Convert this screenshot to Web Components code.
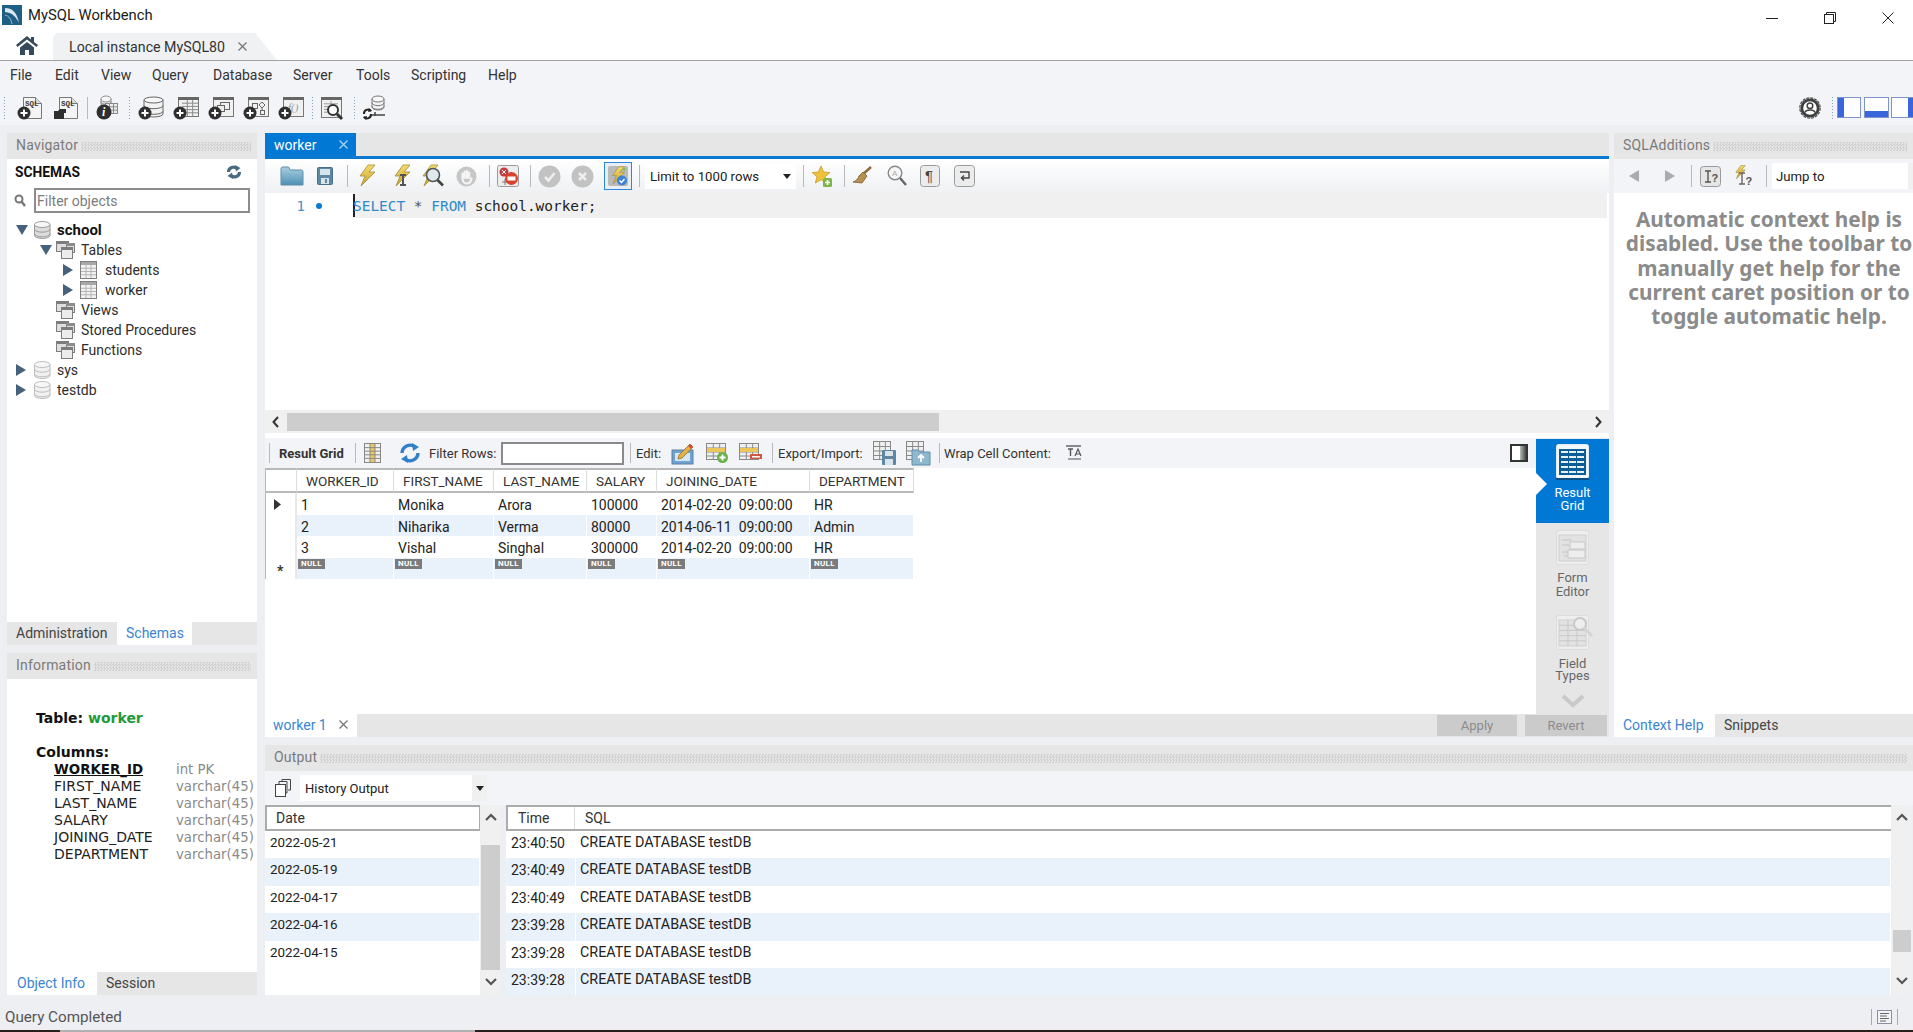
<!DOCTYPE html>
<html>
<head>
<meta charset="utf-8">
<title>MySQL Workbench</title>
<style>
  html,body{margin:0;padding:0;}
  body{width:1913px;height:1032px;overflow:hidden;background:#eeeff2;font-family:Roboto,"Noto Sans",sans-serif;font-size:14px;color:#222;}
</style>
</head>
<body>
<wb-titlebar></wb-titlebar>
<wb-tabstrip></wb-tabstrip>
<wb-menubar></wb-menubar>
<wb-maintools></wb-maintools>
<wb-main>
  <wb-navigator slot="nav"></wb-navigator>
  <wb-info slot="info"></wb-info>
  <wb-editor slot="editor"></wb-editor>
  <wb-result slot="result"></wb-result>
  <wb-additions slot="additions"></wb-additions>
  <wb-output slot="output"></wb-output>
</wb-main>
<wb-status></wb-status>

<script>
// small drawing helpers for the toolbar icons
const plus=(x,y,r=6.5)=>`<circle cx="${x}" cy="${y}" r="${r}" fill="#2f2f2f"/><path d="M${x-3.5} ${y}h7M${x} ${y-3.5}v7" stroke="#fff" stroke-width="2"/>`;
const win=(x,y,w,h,inner='')=>`<rect x="${x+.5}" y="${y+.5}" width="${w}" height="${h}" fill="#f1f1f1" stroke="#777"/><rect x="${x}" y="${y}" width="${w+1}" height="3" fill="#666"/>${inner}`;
const cyl=(x,y,w,h,f='#e9e9e9',s='#8f8f8f')=>{
  const b=h-6,t=h/3-1;
  return `<path d="M${x} ${y+3}v${b}a${w/2} 3 0 0 0 ${w} 0v-${b}z" fill="${f}" stroke="${s}"/><ellipse cx="${x+w/2}" cy="${y+3}" rx="${w/2}" ry="3" fill="#f7f7f7" stroke="${s}"/><path d="M${x} ${y+3+t}a${w/2} 3 0 0 0 ${w} 0M${x} ${y+3+2*t}a${w/2} 3 0 0 0 ${w} 0" fill="none" stroke="${s}"/>`;
};
const lines=(x,y,w,h,nx,ny,c='#8a8a8a')=>{
  let d='';
  for(let i=1;i<nx;i++)d+=`M${x+i*w/nx} ${y}v${h}`;
  for(let i=1;i<ny;i++)d+=`M${x} ${y+i*h/ny}h${w}`;
  return `<path d="${d}" stroke="${c}" stroke-width="1" fill="none"/>`;
};
const boltPath='M11 1L3 12h5L4 22 18 8h-6l6-7z';
const bolt=`<defs><linearGradient id="b" x1="0" y1="0" x2="0" y2="1"><stop offset="0" stop-color="#f6dc6a"/><stop offset="1" stop-color="#c9a02e"/></linearGradient></defs>`;
const grp=(inner='')=>`<rect x="1.500" y=".5" width="12" height="10" fill="#dedede" stroke="#7d7d7d"/><rect x="1" y="0" width="13" height="3" fill="#7d7d7d"/><rect x="11.500" y="2.500" width="8" height="9" fill="#dedede" stroke="#7d7d7d"/><rect x="11" y="2" width="9" height="3" fill="#8c8c8c"/><rect x="6.500" y="6.500" width="11" height="11" fill="#ececec" stroke="#7d7d7d"/><rect x="6" y="6" width="12" height="3" fill="#7d7d7d"/>${inner}`;

const ICONS={
  logo:[20,20,`<rect width="20" height="20" fill="#1e5f86"/><path d="M3 3c7 0 12 4 14 15-3-6-6-10-14-11z" fill="#d9e6ee"/><path d="M3 10c4 1 6 4 7 9" stroke="#9bbccd" fill="none"/>`],
  home:[22,20,`<path d="M11 1L0 10l1.500 2L11 4.500 20.500 12 22 10l-4-3V2h-3v2.600z" fill="#37495c"/><path d="M4 12.500L11 7l7 5.500V20h-5v-5H9v5H4z" fill="#37495c"/>`],
  newsql:[26,24,`<path d="M6.500 1.500h12l6 6v15h-18z" fill="#f4f4f4" stroke="#777"/><path d="M18.500 1.500v6h6" fill="#ddd" stroke="#777"/><text x="8" y="10" font-family="Liberation Mono" font-weight="700" font-size="7.500" fill="#333">SQL</text>${plus(7,17)}`],
  opensql:[26,24,`<path d="M6.500 1.500h12l6 6v15h-18z" fill="#f4f4f4" stroke="#777"/><path d="M18.500 1.500v6h6" fill="#ddd" stroke="#777"/><text x="8" y="10" font-family="Liberation Mono" font-weight="700" font-size="7.500" fill="#333">SQL</text><path d="M1 23v-8h4l2-2h6v4h-2v6z" fill="#2f2f2f"/>`],
  info:[22,24,`${cyl(5,0,10,10)}<rect x="9.500" y="7.500" width="12" height="10" fill="#eee" stroke="#888"/>${lines(9.500,7.500,12,10,3,3)}<circle cx="8" cy="16" r="7.500" fill="#2f2f2f"/><text x="6" y="20" font-family="Liberation Serif" font-style="italic" font-weight="700" font-size="12" fill="#fff">i</text>`],
  newschema:[26,24,`${cyl(6,1,19,20,'#f2f2f2','#666')}${plus(7,17)}`],
  newtable:[26,24,`${win(5,1,20,19,lines(9,4,16,16,3,5))}${plus(7,17)}`],
  newview:[26,24,`${win(5,1,20,19,'<rect x="12.500" y="6.500" width="9" height="7" fill="none" stroke="#666"/><rect x="9.500" y="9.500" width="7" height="6" fill="#eee" stroke="#666"/>')}${plus(7,17)}`],
  newproc:[26,24,`${win(5,1,20,19,'<rect x="9.500" y="7.500" width="5" height="5" fill="none" stroke="#666"/><path d="M19 6l3 3-3 3-3-3zM19 12v3" fill="none" stroke="#666"/><rect x="17.500" y="14.500" width="4" height="4" fill="none" stroke="#666"/>')}${plus(7,17)}`],
  newfunc:[26,24,`${win(5,1,20,19,'<text x="10" y="15" font-family="Liberation Serif" font-style="italic" font-size="11" fill="#999">f()</text>')}${plus(7,17)}`],
  inspect:[23,24,`${win(1,1,20,20,lines(4,5,14,14,2,5,'#999'))}<circle cx="13" cy="14" r="5" fill="#fff" stroke="#333" stroke-width="2"/><path d="M17 18l5 5" stroke="#333" stroke-width="3"/>`],
  reconnect:[24,24,`${cyl(10,0,12,14,'#f2f2f2','#777')}<path d="M13 16v4M10 19h13" stroke="#444" stroke-width="1.500"/><path d="M2 18a4 4 0 0 1 7-3M9 18a4 4 0 0 1-7 3" fill="none" stroke="#222" stroke-width="2"/><path d="M7 12l3 3-4 1zM4 24l-3-3 4-1z" fill="#222"/>`],
  acct:[22,22,`<circle cx="11" cy="11" r="10.200" fill="none" stroke="#4a4a4a" stroke-width="1.200" stroke-dasharray="3 1"/><circle cx="11" cy="11" r="8.200" fill="#fff" stroke="#3f3f3f" stroke-width="2.800"/><circle cx="11" cy="8.800" r="2.800" fill="none" stroke="#3f3f3f" stroke-width="1.500"/><path d="M5.800 15.500c1.200-3.500 9.200-3.500 10.400 0" fill="none" stroke="#3f3f3f" stroke-width="1.500"/>`],
  layL:[24,21,`<rect x=".5" y=".5" width="23" height="20" fill="#fff" stroke="#7f93c9"/><rect x="1" y="1" width="6" height="19" fill="#3a66dc"/>`],
  layM:[25,21,`<rect x=".5" y=".5" width="24" height="20" fill="#fff" stroke="#7f93c9"/><rect x="1" y="14" width="23" height="6" fill="#3a66dc"/>`],
  layR:[22,21,`<rect x=".5" y=".5" width="24" height="20" fill="#fff" stroke="#7f93c9"/><rect x="17" y="1" width="7" height="19" fill="#3a66dc"/>`],
  folder:[24,20,`<defs><linearGradient id="f" x1="0" y1="0" x2="0" y2="1"><stop offset="0" stop-color="#a9cfe4"/><stop offset="1" stop-color="#4f8fb3"/></linearGradient></defs><path d="M1 19V2.500C1 1.700 1.700 1 2.500 1h6l2 3h11c.8 0 1.500.7 1.500 1.500V19z" fill="url(#f)" stroke="#5f8ea8"/>`],
  save:[16,20,`<rect x=".5" y="1.500" width="15" height="17" rx="1" fill="#5d87a3" stroke="#48708b"/><rect x="3" y="3" width="10" height="6" fill="#d8e4ec"/><rect x="4" y="12" width="8" height="6" fill="#d8e4ec"/><rect x="8" y="13" width="2" height="4" fill="#5d87a3"/>`],
  bolt:[19,24,`${bolt}<path d="${boltPath}" fill="url(#b)" stroke="#a58a3a" stroke-width=".8"/>`],
  boltI:[18,24,`${bolt}<path d="${boltPath}" fill="url(#b)" stroke="#a58a3a" stroke-width=".8"/><path d="M8 11h6M11 11v10M8 21h6" stroke="#555" stroke-width="2"/>`],
  boltMag:[24,24,`${bolt}<path d="${boltPath}" fill="url(#b)" stroke="#a58a3a" stroke-width=".8"/><circle cx="13" cy="11" r="6.500" fill="#dfe8ec" stroke="#555" stroke-width="1.600"/><path d="M17.500 16l5.500 5.500" stroke="#444" stroke-width="2.600"/>`],
  hand:[21,21,`<circle cx="10.500" cy="10.500" r="10" fill="#c6c6c6"/><path d="M6.500 13V7.500M8.700 12V5.500M11 12V5M13.200 12V6.500M6.500 13c.4 3.500 2 4.500 4.500 4.500s4-1.500 4.500-5" fill="none" stroke="#f4f4f4" stroke-width="2.200" stroke-linecap="round"/>`],
  stopErr:[22,22,`<rect x=".5" y=".5" width="21" height="21" rx="2" fill="#ededed" stroke="#9b9b9b"/><path d="M5 17h6M8 14v6" stroke="#777"/><circle cx="7" cy="7" r="4.500" fill="#c53a3a"/><path d="M5 5l4 4M9 5l-4 4" stroke="#fff"/><circle cx="14.500" cy="13.500" r="6.500" fill="#d8432f"/><rect x="10.500" y="11.500" width="8" height="4" fill="#fff"/>`],
  check:[23,23,`<circle cx="11.500" cy="11.500" r="11" fill="#c2c2c2"/><path d="M7 12l3.500 3.500L16.500 8" fill="none" stroke="#eee" stroke-width="2.600"/>`],
  cross:[23,23,`<circle cx="11.500" cy="11.500" r="11" fill="#c2c2c2"/><path d="M8 8l7 7M15 8l-7 7" fill="none" stroke="#eee" stroke-width="2.600"/>`],
  toggle:[28,28,`<rect x=".5" y=".5" width="27" height="27" fill="#e8eef4" stroke="#2f86d6"/><rect x="4" y="4" width="20" height="20" rx="2" fill="#b9b9b9"/>${bolt}<g transform="translate(6 4) scale(.8)"><path d="${boltPath}" fill="url(#b)" stroke="#a58a3a" stroke-width=".8"/></g><circle cx="18" cy="18.500" r="5" fill="#3d82d4"/><path d="M15.500 18.500l2 2 3-3.500" fill="none" stroke="#fff" stroke-width="1.400"/><circle cx="20" cy="7" r="1.500" fill="#7cc14c"/>`],
  star:[21,24,`<path d="M9 2l2.600 6 6.400.5-4.900 4.200 1.500 6.300L9 15.700 3.400 19l1.500-6.300L0 8.500 6.400 8z" fill="#f0c23b" stroke="#c79a28" stroke-width=".8"/><rect x="11" y="14" width="9" height="9" rx="1.500" fill="#7cb64a"/><path d="M15.500 16v5M13 18.500h5" stroke="#fff" stroke-width="1.600"/>`],
  broom:[21,20,`<path d="M19 1L10 9" stroke="#8c6a3a" stroke-width="2.400"/><path d="M11 6l4 4-5 7-9-1c3-1 5-3 6-6z" fill="#b6924f" stroke="#7d6030" stroke-width=".8"/>`],
  mag:[20,22,`<circle cx="8" cy="8" r="6.800" fill="#f7f7f7" stroke="#888" stroke-width="1.400"/><path d="M13 13l6 7" stroke="#666" stroke-width="2.400"/><text x="5" y="11" font-family="Liberation Sans" font-size="8" fill="#aaa">A</text>`],
  para:[20,22,`<rect x=".5" y=".5" width="19" height="21" rx="3" fill="#ececec" stroke="#9b9b9b"/><text x="5" y="16" font-family="Liberation Sans" font-size="15" fill="#444">¶</text>`],
  wrap:[21,22,`<rect x=".5" y=".5" width="20" height="21" rx="3" fill="#ececec" stroke="#9b9b9b"/><path d="M6 7h9v6H8M10 10.500L7.500 13l2.500 2.500" fill="none" stroke="#444" stroke-width="1.400"/>`],
  refresh:[16,14,`<path d="M2.500 7a5 5 0 0 1 8.500-3.500M13.500 7a5 5 0 0 1-8.500 3.500" fill="none" stroke="#4a6a80" stroke-width="3.200"/><path d="M9 0l5.500 3L10 6.500zM7 14l-5.500-3L6 7.500z" fill="#4a6a80"/>`],
  search:[12,13,`<circle cx="5" cy="5" r="3.500" fill="none" stroke="#777" stroke-width="2"/><path d="M7.500 7.500L11 12" stroke="#777" stroke-width="2.400"/>`],
  dbg:[17,18,`${cyl(.5,.5,15.500,17,'#dcdcdc','#9a9a9a')}`],
  dbl:[17,18,`${cyl(.5,.5,15.500,17,'#f1f1f1','#bdbdbd')}`],
  grp:[20,18,grp()],
  tbl:[17,18,`<rect x=".5" y=".5" width="16" height="17" fill="#f2f2f2" stroke="#7f7f7f"/><rect x="1" y="1" width="15" height="3" fill="#a8a8a8"/>${lines(1,4,15,13,3,4,'#b4b4b4')}`],
  'tri-d':[12,10,`<path d="M0 0h12L6 10z" fill="#46617b"/>`],
  'tri-r':[10,12,`<path d="M0 0l10 6-10 6z" fill="#46617b"/>`],
  'row-r':[7,11,`<path d="M0 0l7 5.500-7 5.500z" fill="#333"/>`],
  colgrid:[17,20,`<rect x=".5" y=".5" width="16" height="19" fill="#f0f0f0" stroke="#888"/><rect x="6" y="1" width="5" height="18" fill="#ecc65a"/>${lines(1,1,15,18,3,5)}`],
  sync:[22,22,`<path d="M3 11a8 8 0 0 1 13-6M19 11a8 8 0 0 1-13 6" fill="none" stroke="#2f7fc9" stroke-width="3.400"/><path d="M13 1l7 4-6 4zM9 21l-7-4 6-4z" fill="#2f7fc9"/>`],
  edit:[23,22,`<rect x="1" y="8" width="21" height="14" fill="#6fa3d4" stroke="#5c7f9f"/><rect x="4" y="11" width="15" height="8" fill="#d7e6f3"/><path d="M19 2l3 3-11 11-4 1 1-4z" fill="#e4b14d" stroke="#9a6f22" stroke-width=".8"/><path d="M19 2l3 3-2 2-3-3z" fill="#d34b3b"/>`],
  addrow:[23,20,`<rect x=".5" y=".5" width="19" height="16" fill="#f0f0f0" stroke="#888"/>${lines(1,1,19,16,3,4)}<rect x="1" y="5" width="18" height="4" fill="#ecc65a"/><circle cx="16.500" cy="14.500" r="5.500" fill="#6cb04a"/><path d="M13.500 14.500h6M16.500 11.500v6" stroke="#fff" stroke-width="1.800"/>`],
  delrow:[23,20,`<rect x=".5" y=".5" width="19" height="16" fill="#f0f0f0" stroke="#888"/>${lines(1,1,19,16,3,4)}<rect x="1" y="5" width="18" height="4" fill="#ecc65a"/><rect x="11" y="11" width="12" height="5" fill="#d0583f"/><rect x="13" y="13" width="8" height="1.500" fill="#fff"/>`],
  export:[23,24,`<rect x=".5" y=".5" width="17" height="18" fill="#f0f0f0" stroke="#888"/>${lines(1,1,17,18,3,4)}<rect x="9" y="9" width="14" height="15" rx="1" fill="#5d87a3"/><rect x="12" y="10" width="8" height="5" fill="#d8e4ec"/><rect x="12" y="18" width="8" height="6" fill="#d8e4ec"/>`],
  import:[24,24,`<rect x=".5" y=".5" width="17" height="18" fill="#f0f0f0" stroke="#888"/>${lines(1,1,17,18,3,4)}<path d="M6 9h6l2 2h10v13H6z" fill="#8fb7d0" stroke="#5f8ea8"/><path d="M15 21v-6M12 17l3-3 3 3" fill="none" stroke="#fff" stroke-width="1.800"/>`],
  wrapcell:[16,16,`<path d="M0 1h15" stroke="#666" stroke-width="1.500"/><path d="M2 4h5M4.500 4v7" stroke="#555" stroke-width="1.400"/><path d="M9 11l3-7 3 7M10 9h4M2 14h13" stroke="#555" fill="none" stroke-width="1.200"/>`],
  panel:[18,18,`<defs><linearGradient id="p"><stop offset="0" stop-color="#bbb"/><stop offset="1" stop-color="#444"/></linearGradient></defs><rect x="1" y="1" width="16" height="16" fill="#fff" stroke="#333" stroke-width="2"/><rect x="10" y="2" width="6" height="14" fill="url(#p)"/>`],
  rgrid:[34,36,`<rect x=".5" y=".5" width="32" height="34" rx="2" fill="#f4f7fa" stroke="#e1ebf3"/><rect x="3" y="5" width="27" height="26" fill="#0b5d97"/>${[8,13,18,23,28].map(y=>`<path d="M5 ${y}h7M13 ${y}h7M21 ${y}h7" stroke="#e7f0f6" stroke-width="2"/>`).join('')}<rect y="34" width="33" height="2" fill="#0a4f86"/>`],
  form:[34,36,`<rect x=".5" y=".5" width="32" height="34" rx="2" fill="#eeeeee" stroke="#dcdcdc"/><rect x="3" y="5" width="27" height="26" fill="#e2e2e2" stroke="#d0d0d0"/><path d="M6 10h10M6 15h7M6 22h7M8 26h10" stroke="#c4c4c4"/><rect x="14" y="12" width="15" height="7" fill="#ededed" stroke="#c8c8c8"/><rect x="12" y="20" width="17" height="8" fill="#ededed" stroke="#c8c8c8"/>`],
  fieldt:[40,36,`<rect x=".5" y=".5" width="32" height="34" rx="2" fill="#eeeeee" stroke="#dcdcdc"/><rect x="3" y="5" width="27" height="26" fill="#e2e2e2" stroke="#d0d0d0"/>${lines(3,5,27,26,3,5,'#c9c9c9')}<circle cx="24" cy="9" r="6" fill="#eee" stroke="#c8c8c8" stroke-width="2"/><path d="M28 13l8 8" stroke="#d4d4d4" stroke-width="3"/>`],
  chev:[24,14,`<path d="M2 2l10 9 10-9" fill="none" stroke="#c9c9c9" stroke-width="4"/>`],
  chevL:[7,12,`<path d="M6 1L1.500 6 6 11" fill="none" stroke="#333" stroke-width="2"/>`],
  chevR:[7,12,`<path d="M1 1l4.500 5L1 11" fill="none" stroke="#333" stroke-width="2"/>`],
  back:[10,12,`<path d="M10 0L0 6l10 6z" fill="#a8acb0"/>`],
  fwd:[10,12,`<path d="M0 0l10 6-10 6z" fill="#a8acb0"/>`],
  helpI:[21,21,`<rect x=".5" y=".5" width="20" height="20" rx="3" fill="#e6e6e6" stroke="#9a9a9a"/><path d="M5 5h6M8 5v11M5 16h6" stroke="#555" stroke-width="1.400" fill="none"/><text x="11.500" y="16" font-family="Liberation Sans" font-weight="700" font-size="11" fill="#555">?</text>`],
  helpB:[20,22,`${bolt}<g transform="scale(.62)"><path d="${boltPath}" fill="url(#b)" stroke="#a58a3a"/></g><path d="M5 8h6M8 8v11M5 19h6" stroke="#666" stroke-width="1.400" fill="none"/><text x="11.500" y="20" font-family="Liberation Sans" font-weight="700" font-size="11" fill="#555">?</text>`],
  copy:[16,18,`<rect x=".5" y="5.500" width="10" height="12" fill="#fff" stroke="#444"/><path d="M4 5V2.500h8V14h-1.500M7 2V.5h8.500V11H13" fill="none" stroke="#444"/>`],
  status:[15,14,`<rect x=".5" y=".5" width="14" height="13" fill="#f3f3f7" stroke="#8c8ca2"/><path d="M3 3.500h9M3 6h7M3 8.500h9M3 11h6" stroke="#666"/>`],
  ddown:[8,5,`<path d="M0 0h8L4 5z" fill="#222"/>`],
  chevS:[12,8,`<path d="M1 7l5-5 5 5" fill="none" stroke="#555" stroke-width="2.200"/>`],
  chevD:[12,8,`<path d="M1 1l5 5 5-5" fill="none" stroke="#555" stroke-width="2.200"/>`],
  min:[12,1,`<path d="M0 .5h12" stroke="#222"/>`],
  restore:[12,12,`<rect x=".5" y="2.500" width="9" height="9" fill="none" stroke="#222"/><path d="M2.500 2.500V.5h9v9h-2" fill="none" stroke="#222"/>`],
  closew:[12,12,`<path d="M.5.5l11 11M11.500.5l-11 11" stroke="#222"/>`],
  x:[9,9,`<path d="M.5.5l8 8M8.500.5l-8 8" stroke="currentColor" stroke-width="1.300"/>`],
};

class WbIcon extends HTMLElement{
  connectedCallback(){
    const [w,h,svg]=ICONS[this.getAttribute('name')];
    if(!this.shadowRoot)this.attachShadow({mode:'open'});
    this.shadowRoot.innerHTML=`<style>:host{display:inline-block;width:${w}px;height:${h}px;flex:none;line-height:0;}svg{display:block;overflow:visible;}</style><svg width="${w}" height="${h}" viewBox="0 0 ${w} ${h}">${svg}</svg>`;
  }
}
customElements.define('wb-icon',WbIcon);

// lays toolbar items left to right, from their measured x positions
function strip(origin,items){
  let cur=origin,out='';
  for(const it of items){
    const k=it[0];
    if(k==='i'){
      const w=ICONS[it[1]][0];
      out+=`<wb-icon name="${it[1]}" style="margin-left:${it[2]-cur}px"></wb-icon>`;
      cur=it[2]+w;
    }else if(k==='s'||k==='d'){
      out+=`<span class="${k==='s'?'sep':'dots'}" style="margin-left:${it[1]-cur}px"></span>`;
      cur=it[1]+1;
    }else if(k==='t'){
      out+=`<span class="txt ${it[4]||''}" style="margin-left:${it[2]-cur}px;width:${it[3]}px">${it[1]}</span>`;
      cur=it[2]+it[3];
    }else if(k==='b'){
      out+=`<span class="box" style="margin-left:${it[1]-cur}px;width:${it[2]}px">${it[3]}</span>`;
      cur=it[1]+it[2];
    }
  }
  return out;
}
const stripCss=`
  .sep{width:1px;height:22px;background:#b9b9bd;flex:none;}
  .dots{width:1px;height:22px;flex:none;background:repeating-linear-gradient(#8aa0c0 0 1px,transparent 1px 3px);}
  .txt{flex:none;white-space:nowrap;color:#333;}
`;

class WbEl extends HTMLElement{
  constructor(){
    super();
    this.attachShadow({mode:'open'}).innerHTML=this.markup();
  }
}

class WbTitlebar extends WbEl{
  markup(){return `<style>
    :host{display:flex;align-items:center;height:33px;background:#fff;font-size:14.800px;color:#1c1c1c;}
    wb-icon{margin:0 6px 3px 2px;}
    span{margin-bottom:3px;}
    .ctl{margin-left:auto;display:flex;align-items:center;padding-right:19px;gap:46px;height:30px;margin-top:3px;}
    .ctl wb-icon{margin:0;}
  </style><wb-icon name="logo"></wb-icon><span>MySQL Workbench</span>
  <div class="ctl"><wb-icon name="min"></wb-icon><wb-icon name="restore"></wb-icon><wb-icon name="closew"></wb-icon></div>`;}
}
class WbTabstrip extends WbEl{
  markup(){return `<style>
    :host{display:flex;align-items:stretch;height:28px;background:#fff;border-bottom:1px solid #a2a2a2;box-sizing:border-box;}
    .home{width:53px;display:flex;align-items:center;justify-content:center;padding-bottom:3px;box-sizing:border-box;}
    .tab{width:224px;display:flex;align-items:center;padding-left:16px;box-sizing:border-box;background:#f0f1f3;color:#333;font-size:14.200px;
      clip-path:polygon(4px 0,202px 0,224px 100%,0 100%,0 4px);}
    .tab wb-icon{margin-left:13px;color:#777;}
  </style><div class="home"><wb-icon name="home"></wb-icon></div>
  <div class="tab">Local instance MySQL80<wb-icon name="x"></wb-icon></div>`;}
}
class WbMenubar extends WbEl{
  markup(){
    const m=[['File',10,23],['Edit',55,24],['View',101,30],['Query',152,39],['Database',213,58],['Server',293,40],['Tools',356,34],['Scripting',411,55],['Help',488,28]];
    return `<style>
      :host{display:flex;align-items:center;height:29px;background:#f3f4f7;font-size:14px;color:#222;padding-bottom:2px;box-sizing:border-box;}
      ${stripCss}
    </style>${strip(0,m.map(([t,x,w])=>['t',t,x,w]))}`;
  }
}
class WbMaintools extends WbEl{
  markup(){
    return `<style>
      :host{display:flex;align-items:center;height:35px;background:#f3f4f7;}
      ${stripCss}
    </style>${strip(0,[['d',4],['i','newsql',17],['i','opensql',53],['s',87],['i','info',96],['d',129],['i','newschema',138],['i','newtable',173],['i','newview',208],['i','newproc',243],['i','newfunc',278],['d',312],['i','inspect',320],['d',354],['i','reconnect',362],['i','acct',1799],['d',1832],['i','layL',1837],['i','layM',1864],['i','layR',1891]])}`;
  }
}
class WbMain extends WbEl{
  markup(){return `<style>
    :host{display:grid;grid-template-columns:250px 1648px;grid-template-rows:604px 250px;column-gap:8px;row-gap:8px;padding:8px 0 0 7px;height:870px;box-sizing:border-box;}
    .left{grid-row:1 / 3;display:flex;flex-direction:column;gap:8px;}
    .up{display:flex;gap:5px;}
    .mid{width:1344px;display:flex;flex-direction:column;}
  </style>
  <div class="left"><slot name="nav"></slot><slot name="info"></slot></div>
  <div class="up"><div class="mid"><slot name="editor"></slot><slot name="result"></slot></div><slot name="additions"></slot></div>
  <slot name="output"></slot>`;}
}
class WbPaneHead extends WbEl{
  markup(){return `<style>
    :host{display:flex;align-items:center;height:26px;background:#e6e6e7;color:#7a7a7a;font-size:14px;padding:0 6px 2px 9px;box-sizing:border-box;flex:none;letter-spacing:.2px;}
    i{flex:1;height:9px;margin:2px 0 0 3px;background:repeating-conic-gradient(#d2d2d2 0 25%,#e6e6e7 0 50%) 0 0/3px 3px;}
  </style><slot></slot><i></i>`;}
}
class WbTabrow extends WbEl{
  markup(){return `<style>
    :host{display:flex;height:23px;background:#e6e6e7;flex:none;font-size:14px;align-items:stretch;}
  </style><slot></slot>`;}
}
class WbTab extends WbEl{
  markup(){return `<style>
    :host{display:flex;align-items:center;padding:0 0 2px var(--pad,9px);box-sizing:border-box;color:#444;white-space:nowrap;}
    :host([active]){background:#fff;color:#3a85d2;}
  </style><slot></slot>`;}
}
class WbTreeRow extends WbEl{
  markup(){return `<style>
    :host{display:flex;align-items:center;height:20px;padding-left:9px;font-size:14px;color:#2d2d2d;}
    :host([level="1"]){padding-left:33px;}
    :host([level="2"]){padding-left:56px;}
    .a{width:18px;display:flex;flex:none;}
    :host([level="1"]) .a{width:15px;}
    :host([level="2"]) .a{width:17px;}
    .i{width:23px;display:flex;flex:none;}
    :host([level="1"]) .i{width:26px;}
    :host([level="2"]) .i{width:25px;}
    :host([bold]){font-weight:700;color:#111;font-size:15px;}
  </style><span class="a">${this.hasAttribute('arrow')?`<wb-icon name="tri-${this.getAttribute('arrow')}"></wb-icon>`:''}</span><span class="i"><wb-icon name="${this.getAttribute('icon')}"></wb-icon></span><slot></slot>`;}
}
class WbNavigator extends WbEl{
  markup(){return `<style>
    :host{display:flex;flex-direction:column;height:512px;background:#fff;}
    .body{flex:1;}
    .sch{display:flex;align-items:center;justify-content:space-between;height:26px;padding:0 15px 0 8px;font-weight:700;font-size:13.800px;color:#111;}
    .flt{display:flex;align-items:center;height:25px;margin-top:3px;padding-left:7px;gap:8px;}
    .flt div{width:216px;height:25px;border:2px solid #8c8c8c;box-sizing:border-box;color:#7c7c7c;font-size:14px;display:flex;align-items:center;padding-left:1px;}
    .tree{margin-top:7px;}
  </style>
  <wb-pane-head>Navigator</wb-pane-head>
  <div class="body">
    <div class="sch">SCHEMAS<wb-icon name="refresh"></wb-icon></div>
    <div class="flt"><wb-icon name="search"></wb-icon><div>Filter objects</div></div>
    <div class="tree">
      <wb-tree-row arrow="d" icon="dbg" bold>school</wb-tree-row>
      <wb-tree-row level="1" arrow="d" icon="grp">Tables</wb-tree-row>
      <wb-tree-row level="2" arrow="r" icon="tbl">students</wb-tree-row>
      <wb-tree-row level="2" arrow="r" icon="tbl">worker</wb-tree-row>
      <wb-tree-row level="1" icon="grp">Views</wb-tree-row>
      <wb-tree-row level="1" icon="grp">Stored Procedures</wb-tree-row>
      <wb-tree-row level="1" icon="grp">Functions</wb-tree-row>
      <wb-tree-row arrow="r" icon="dbl">sys</wb-tree-row>
      <wb-tree-row arrow="r" icon="dbl">testdb</wb-tree-row>
    </div>
  </div>
  <wb-tabrow><wb-tab style="width:110px">Administration</wb-tab><wb-tab active style="width:75px">Schemas</wb-tab></wb-tabrow>`;}
}
class WbInfo extends WbEl{
  markup(){
    const cols=[['FIRST_NAME'],['LAST_NAME'],['SALARY'],['JOINING_DATE'],['DEPARTMENT']];
    return `<style>
      :host{display:flex;flex-direction:column;height:342px;background:#fff;}
      .body{flex:1;padding:31px 0 0 29px;font-family:"DejaVu Sans",sans-serif;font-size:14px;color:#222;}
      b.t{font-size:14px;color:#111;}
      b.t em{font-style:normal;color:#1f9a3a;}
      .hd{margin-top:17px;font-weight:700;font-size:14px;color:#111;line-height:18px;}
      .c{display:grid;grid-template-columns:122px 1fr;padding-left:18px;line-height:17px;white-space:nowrap;}
      .c span:nth-child(even){color:#8a8a8a;font-size:13.300px;}
      .pk{font-weight:700;text-decoration:underline;color:#111;font-size:13.400px;}
    </style>
    <wb-pane-head>Information</wb-pane-head>
    <div class="body">
      <b class="t">Table: <em>worker</em></b>
      <div class="hd">Columns:</div>
      <div class="c"><span class="pk">WORKER_ID</span><span>int PK</span>${cols.map(c=>`<span>${c}</span><span>varchar(45)</span>`).join('')}</div>
    </div>
    <wb-tabrow><wb-tab active style="width:90px;--pad:10px">Object Info</wb-tab><wb-tab style="--pad:9px">Session</wb-tab></wb-tabrow>`;
  }
}
class WbEditor extends WbEl{
  markup(){return `<style>
    :host{display:flex;flex-direction:column;height:305px;background:#fff;flex:none;}
    .tabs{height:26px;flex:none;background:#e6e6e7;border-bottom:3px solid #0a79d0;box-sizing:border-box;display:flex;}
    .tab{width:91px;height:23px;background:#0078d4;color:#fff;font-size:14px;display:flex;align-items:center;padding-left:9px;box-sizing:border-box;}
    .tab wb-icon{margin-left:23px;color:#a9d3f2;}
    .tools{height:34px;flex:none;display:flex;align-items:center;background:linear-gradient(#fff,#eef0f3);}
    ${stripCss}
    .box{height:25px;background:#fff;display:flex;align-items:center;justify-content:space-between;font-size:13.200px;padding-left:5px;box-sizing:border-box;flex:none;padding-right:5px;color:#222;}
    .code{height:217px;flex:none;}
    .line{height:25px;width:1342px;background:#f0f0f0;display:flex;align-items:center;font-family:"DejaVu Sans Mono",monospace;font-size:14.450px;}
    .num{width:40px;text-align:right;color:#4d8fc9;font-size:14px;background:#fff;height:25px;line-height:26px;flex:none;}
    .gut{width:48px;height:25px;background:#fff;flex:none;}
    .dot{display:block;width:6px;height:6px;border-radius:50%;background:#0a79d0;margin:10px 0 0 11px;}
    .cur{width:2px;height:23px;background:#222;flex:none;margin-right:-2px;}
    .kw{color:#2e8bc9;}
    .hs{height:23px;background:#f0f0f0;display:flex;align-items:center;padding:0 7px;box-sizing:border-box;flex:none;}
    .hs .th{width:652px;height:18px;background:#cdcdcd;margin-left:8px;}
    .hs wb-icon:last-child{margin-left:auto;}
    .rest{height:5px;flex:none;}
  </style>
  <div class="tabs"><div class="tab">worker<wb-icon name="x"></wb-icon></div></div>
  <div class="tools">${strip(265,[['i','folder',280],['i','save',317],['s',347],['i','bolt',357],['i','boltI',392],['i','boltMag',420],['i','hand',456],['s',489],['i','stopErr',497],['s',530],['i','check',538],['i','cross',571],['i','toggle',604],['s',639],['b',645,151,'Limit to 1000 rows<wb-icon name="ddown"></wb-icon>'],['s',803],['i','star',812],['s',844],['i','broom',852],['i','mag',887],['i','para',920],['i','wrap',954]])}</div>
  <div class="code"><div class="line"><span class="num">1</span><span class="gut"><span class="dot"></span></span><span class="cur"></span><span style="white-space:pre"><span class="kw">SELECT</span> <span style="color:#555">*</span> <span class="kw">FROM</span> school.worker;</span></div></div>
  <div class="hs"><wb-icon name="chevL"></wb-icon><span class="th"></span><wb-icon name="chevR"></wb-icon></div>
  <div class="rest"></div>`;}
}
class WbGrid extends WbEl{
  markup(){
    const heads=['WORKER_ID','FIRST_NAME','LAST_NAME','SALARY','JOINING_DATE','DEPARTMENT'];
    const rows=[['1','Monika','Arora','100000','2014-02-20&nbsp; 09:00:00','HR'],['2','Niharika','Verma','80000','2014-06-11&nbsp; 09:00:00','Admin'],['3','Vishal','Singhal','300000','2014-02-20&nbsp; 09:00:00','HR']];
    return `<style>
      :host{display:grid;grid-template-columns:32px 97px 100px 93px 70px 153px 104px;width:649px;font-size:14px;color:#222;align-self:start;}
      .h{height:25px;box-sizing:border-box;border-top:2px solid #b9b9b9;border-bottom:2px solid #b9b9b9;border-right:1px solid #ddd;background:#fff;display:flex;align-items:center;padding-left:9px;color:#333;white-space:nowrap;font-size:13.500px;}
      .h.rh{border-left:1px solid #b9b9b9;}
      .c{height:21.500px;line-height:21.500px;padding:2px 0 0 4px;white-space:nowrap;border-right:1px solid #fff;box-sizing:border-box;}
      .c.alt{background:#e9f1fb;}
      .c.rh{border-left:1px solid #b9b9b9;display:flex;align-items:center;padding:2px 0 0 8px;border-right:2px solid #e8e8e8;}
      .n{display:block;width:max-content;background:#7b7b7b;color:#fff;font-size:8px;font-weight:700;line-height:10px;padding:0 3px;letter-spacing:.3px;}
      .c.nc{padding:1px 0 0 1px;}
      .star{font-size:14px;font-weight:700;color:#333;line-height:21px;padding:4px 0 0 3px;}
    </style>
    <div class="h rh"></div>${heads.map(h=>`<div class="h">${h}</div>`).join('')}
    ${rows.map((r,i)=>`<div class="c rh">${i==0?'<wb-icon name="row-r"></wb-icon>':''}</div>${r.map(v=>`<div class="c ${i==1?'alt':''}">${v}</div>`).join('')}`).join('')}
    <div class="c rh"><span class="star">*</span></div>${heads.map(()=>`<div class="c alt nc"><span class="n">NULL</span></div>`).join('')}`;
  }
}
class WbResult extends WbEl{
  markup(){return `<style>
    :host{display:flex;flex-direction:column;height:299px;flex:none;background:#fff;}
    .row{display:flex;height:276px;flex:none;}
    .m{width:1271px;display:flex;flex-direction:column;}
    .tools{height:30px;background:#f3f4f7;display:flex;align-items:center;flex:none;font-size:13px;}
    ${stripCss}
    .sep{height:20px;}
    .b{font-weight:700;color:#333;}
    .box{height:23px;background:#fff;border:2px solid #8a8a8a;box-sizing:border-box;flex:none;}
    .side{width:73px;background:#e6e6e7;display:flex;flex-direction:column;align-items:center;font-size:13px;line-height:13px;color:#666;text-align:center;padding-top:1px;box-sizing:border-box;}
    .on{align-self:stretch;background:#0078d4;color:#fff;height:84px;flex:none;display:flex;flex-direction:column;align-items:center;padding-top:5px;box-sizing:border-box;position:relative;}
    .on::before{content:"";position:absolute;left:0;top:34px;border:11px solid transparent;border-left-color:#fff;border-right:0;}
    .lb{margin-top:6px;}
    .s2{padding-top:7px;}
    .s2 .lb{margin-top:3px;line-height:13.500px;}
    .s3{padding-top:17px;}
    .s3 wb-icon{margin-left:7px;}
    .s3 .lb{margin-top:5px;line-height:12px;}
    .ch{margin-top:12px;}
    .bar{flex:1;background:#e6e6e7;display:flex;align-items:stretch;font-size:14px;}
    .t{width:92px;background:#fff;color:#3a85d2;display:flex;align-items:center;padding:0 0 2px 8px;box-sizing:border-box;}
    .t wb-icon{margin-left:12px;color:#777;}
    .btn{width:80px;height:21px;margin-top:1px;background:#cbcbcb;color:#8c8c8c;display:flex;align-items:center;justify-content:center;font-size:13px;}
  </style>
  <div class="row">
    <div class="m">
      <div class="tools">${strip(265,[['s',269],['t','Result Grid',279,68,'b'],['s',355],['i','colgrid',364],['i','sync',399],['t','Filter Rows:',429,66],['b',501,123,''],['s',630],['t','Edit:',636,27],['i','edit',671],['i','addrow',706],['i','delrow',739],['s',772],['t','Export/Import:',778,86],['i','export',873],['i','import',906],['s',939],['t','Wrap Cell Content:',944,110],['i','wrapcell',1066],['i','panel',1510]])}</div>
      <wb-grid></wb-grid>
    </div>
    <div class="side">
      <div class="on"><wb-icon name="rgrid"></wb-icon><span class="lb">Result<br>Grid</span></div>
      <div class="s2"><wb-icon name="form"></wb-icon><div class="lb">Form<br>Editor</div></div>
      <div class="s3"><wb-icon name="fieldt"></wb-icon><div class="lb">Field<br>Types</div></div>
      <wb-icon class="ch" name="chev"></wb-icon>
    </div>
  </div>
  <div class="bar"><div class="t">worker 1<wb-icon name="x"></wb-icon></div>
    <div class="btn" style="margin-left:1080px">Apply</div><div class="btn" style="margin-left:8px;width:82px">Revert</div></div>`;}
}
class WbAdditions extends WbEl{
  markup(){return `<style>
    :host{display:flex;flex-direction:column;width:299px;height:604px;background:#fff;flex:none;}
    .tools{height:34px;background:#f3f4f7;display:flex;align-items:center;flex:none;font-size:13.200px;}
    ${stripCss}
    .box{height:26px;background:#fff;display:flex;align-items:center;justify-content:space-between;padding-left:4px;box-sizing:border-box;flex:none;color:#222;}
    .box i{width:5px;height:26px;background:#f0f0f0;}
    .body{flex:1;padding:14px 0 0 10px;}
    .help{width:290px;text-align:center;font-family:"Noto Sans",sans-serif;font-weight:700;font-size:20.800px;line-height:24.300px;color:#8b8b8b;}
  </style>
  <wb-pane-head>SQLAdditions</wb-pane-head>
  <div class="tools">${strip(1614,[['i','back',1629],['i','fwd',1665],['s',1691],['i','helpI',1700],['i','helpB',1734],['s',1766],['b',1772,141,'Jump to<i></i>']])}</div>
  <div class="body"><div class="help">Automatic context help is disabled. Use the toolbar to manually get help for the current caret position or to toggle automatic help.</div></div>
  <wb-tabrow><wb-tab active style="width:101px">Context Help</wb-tab><wb-tab>Snippets</wb-tab></wb-tabrow>`;}
}
class WbOutput extends WbEl{
  markup(){
    const dates=['2022-05-21','2022-05-19','2022-04-17','2022-04-16','2022-04-15'];
    const times=['23:40:50','23:40:49','23:40:49','23:39:28','23:39:28','23:39:28'];
    return `<style>
      :host{display:flex;flex-direction:column;height:250px;background:#eeeff2;}
      .tools{height:34px;background:#f3f4f7;display:flex;align-items:center;flex:none;font-size:13px;}
      ${stripCss}
      .box{height:26px;background:#fff;display:flex;align-items:center;justify-content:space-between;padding-left:5px;box-sizing:border-box;flex:none;color:#222;padding-right:0;}
      .box i{width:15px;height:26px;background:#f0f0f0;display:flex;align-items:center;justify-content:center;}
      .tb{display:grid;grid-template-columns:215px 1px 19px 6px 1385px 2px 18px;flex:1;height:190px;}
      .tbl{background:#fff;font-size:14px;}
      .hd{height:26px;box-sizing:border-box;border:2px solid #ababab;border-width:2px 0;background:#fff;display:flex;align-items:center;color:#333;}
      .tbl.a .hd{border-left:2px solid #ababab;border-right:1px solid #ababab;padding-left:9px;}
      .tbl.b .hd{border-left:2px solid #ababab;}
      .tbl.b .hd span:first-child{width:67px;padding-left:10px;box-sizing:border-box;border-right:1px solid #ddd;height:22px;line-height:22px;}
      .tbl.b .hd span:last-child{padding-left:10px;}
      .r{display:flex;height:27.400px;line-height:24px;white-space:nowrap;color:#222;}
      .r.alt span{background:#e9f1fb;}
      .tbl.a .r span{width:214px;padding-left:5px;box-sizing:border-box;font-size:13.400px;}
      .tbl.b .r span:first-child{width:69px;padding-left:5px;box-sizing:border-box;margin-right:1px;}
      .tbl.b .r span:last-child{width:1314px;padding-left:4px;box-sizing:border-box;font-size:14.350px;}
      .sb{background:#f0f0f0;display:flex;flex-direction:column;align-items:center;}
      .th{align-self:stretch;background:#cdcdcd;flex:none;}
      .sb wb-icon{margin-top:8px;}
    </style>
    <wb-pane-head>Output</wb-pane-head>
    <div class="tools">${strip(265,[['i','copy',275],['b',300,187,'History Output<i><wb-icon name="ddown"></wb-icon></i>']])}</div>
    <div class="tb">
      <div class="tbl a"><div class="hd">Date</div>${dates.map((d,i)=>`<div class="r ${i%2?'alt':''}"><span>${d}</span></div>`).join('')}</div>
      <div></div>
      <div class="sb"><wb-icon name="chevS"></wb-icon><div class="th" style="margin-top:24px;height:125px"></div><wb-icon name="chevD"></wb-icon></div>
      <div></div>
      <div class="tbl b"><div class="hd"><span>Time</span><span>SQL</span></div>${times.map((t,i)=>`<div class="r ${i%2?'alt':''}"><span>${t}</span><span>CREATE DATABASE testDB</span></div>`).join('')}</div>
      <div></div>
      <div class="sb"><wb-icon name="chevS"></wb-icon><div class="th" style="margin-top:109px;height:22px"></div><wb-icon name="chevD" style="margin-top:25px"></wb-icon></div>
    </div>`;
  }
}
class WbStatus extends WbEl{
  markup(){return `<style>
    :host{display:block;height:37px;background:#eeeff2;font-size:15.200px;color:#555;}
    .b{height:35px;display:flex;align-items:center;padding:9px 0 0 5px;box-sizing:border-box;}
    .r{margin-left:auto;display:flex;align-items:center;gap:5px;padding-right:15px;}
    .r i{width:1px;height:16px;background:#aaa;}
    .s{height:2px;background:linear-gradient(90deg,#2a1f1a 60px,#b0b0b0 60px,#b0b0b0 475px,#2a1f1a 475px);}
  </style>
  <div class="b">Query Completed<div class="r"><i></i><wb-icon name="status"></wb-icon><i></i></div></div><div class="s"></div>`;}
}

customElements.define('wb-titlebar',WbTitlebar);
customElements.define('wb-tabstrip',WbTabstrip);
customElements.define('wb-menubar',WbMenubar);
customElements.define('wb-maintools',WbMaintools);
customElements.define('wb-main',WbMain);
customElements.define('wb-pane-head',WbPaneHead);
customElements.define('wb-tabrow',WbTabrow);
customElements.define('wb-tab',WbTab);
customElements.define('wb-tree-row',WbTreeRow);
customElements.define('wb-navigator',WbNavigator);
customElements.define('wb-info',WbInfo);
customElements.define('wb-editor',WbEditor);
customElements.define('wb-grid',WbGrid);
customElements.define('wb-result',WbResult);
customElements.define('wb-additions',WbAdditions);
customElements.define('wb-output',WbOutput);
customElements.define('wb-status',WbStatus);
</script>
</body>
</html>
